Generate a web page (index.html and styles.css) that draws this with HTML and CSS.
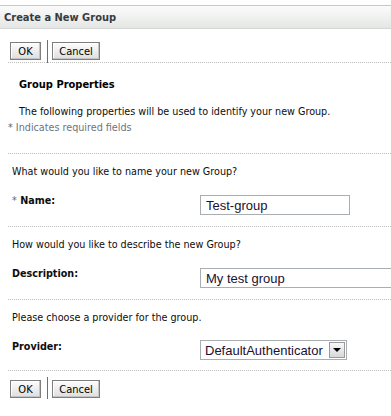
FILE: index.html
```html
<!DOCTYPE html>
<html lang="en">
<head>
    <meta charset="UTF-8">
    <title>Create a New Group</title>
    <link rel="stylesheet" href="styles.css">
</head>
<body>
    <div class="titlebar">
        <h1>Create a New Group</h1>
    </div>

    <div class="toolbar">
        <button class="btn btn-ok">OK</button>
        <span class="sep"></span>
        <button class="btn btn-cancel">Cancel</button>
    </div>

    <div class="intro">
        <h2>Group Properties</h2>
        <p>The following properties will be used to identify your new Group.</p>
    </div>
    <p class="required-note"><span class="star">*</span> Indicates required fields</p>

    <div class="section section-first">
        <p class="question">What would you like to name your new Group?</p>
        <div class="field">
            <label class="label"><span class="star">*</span> Name:</label>
            <input class="text-input input-name" type="text" value="Test-group">
        </div>
    </div>

    <div class="section">
        <p class="question">How would you like to describe the new Group?</p>
        <div class="field">
            <label class="label">Description:</label>
            <input class="text-input input-desc" type="text" value="My test group">
        </div>
    </div>

    <div class="section">
        <p class="question">Please choose a provider for the group.</p>
        <div class="field">
            <label class="label">Provider:</label>
            <div class="select">
                <span class="select-value">DefaultAuthenticator</span>
                <span class="select-arrow"></span>
            </div>
        </div>
    </div>

    <div class="toolbar toolbar-bottom">
        <button class="btn btn-ok">OK</button>
        <span class="sep"></span>
        <button class="btn btn-cancel">Cancel</button>
    </div>
</body>
</html>
```

FILE: styles.css
```css
body { margin: 0; font-family: "DejaVu Sans Condensed", "Liberation Sans", sans-serif; font-size: 10.7px; color: #0d0d0d; background: #fff; width: 391px; overflow: hidden; }
p { margin: 0; }

.titlebar { margin-top: 5px; height: 22px; border-top: 1px solid #c6c6c6; border-bottom: 1px solid #d6d6d6; background: linear-gradient(#fbfbfb, #e4e6e4); display: flex; align-items: center; padding-left: 4px; }
.titlebar h1 { margin: 0; font-size: 11px; font-weight: bold; color: #363b41; }

.toolbar { display: flex; align-items: flex-start; padding: 11px 0 0 10px; height: 22px; }
.sep { width: 1px; height: 23px; background: #6f6f6f; margin: 0 4px 0 6px; }
.btn { font-family: "DejaVu Sans Condensed", "Liberation Sans", sans-serif; font-size: 11px; height: 18px; margin-top: 2px; padding: 0; border: 1px solid #7e7e7e; border-radius: 0; background: linear-gradient(#fdfdfd, #dedede); color: #000; box-shadow: inset -1px -1px 0 #c4c4c4, inset 1px 1px 0 #fff; }
.btn-ok { width: 31px; }
.btn-cancel { width: 48px; }
.toolbar-bottom { margin: 10px 0 0 8px; padding: 6px 0 0 2px; border-top: 1px dotted #bdbdbd; }
.toolbar-bottom .btn { margin-top: 3px; }

.intro { border-top: 1px dotted #bdbdbd; margin-left: 8px; padding: 15px 0 0 11px; }
.intro h2 { margin: 0; font-size: 11px; font-weight: bold; color: #000; line-height: 13px; }
.intro p { margin-top: 14px; line-height: 13px; }

.required-note { margin: 3px 0 0 8px; line-height: 13px; color: #6b7580; }
.star { color: #5d6a78; }

.section { margin: 11px 0 0 8px; border-top: 1px dotted #bdbdbd; padding: 11px 0 0 4px; }
.section-first { margin-top: 19px; }
.question { line-height: 13px; }
.field { display: flex; align-items: flex-start; margin-top: 16px; }
.label { width: 188px; flex-shrink: 0; font-weight: bold; line-height: 13px; }
.label .star { font-weight: normal; }

.text-input { font-family: "Liberation Sans", Arial, sans-serif; font-size: 13px; color: #1a1030; height: 20px; box-sizing: border-box; border: 1px solid #a9aeb2; padding: 0 5px; margin: 1px 0 0 0; outline: none; }
.input-name { width: 150px; }
.input-desc { width: 200px; flex-shrink: 0; }

.select { display: flex; align-items: center; margin-top: 0; height: 20px; width: 147px; box-sizing: border-box; border: 1px solid #a9aeb2; padding: 0 1px 0 4px; font-family: "Liberation Sans", Arial, sans-serif; font-size: 13px; color: #1a1030; }
.select-value { flex: 1; white-space: nowrap; overflow: hidden; }
.select-arrow { width: 16px; height: 16px; box-sizing: border-box; border: 1px solid #9a9a9a; background: linear-gradient(#f8f8f8, #d8d8d8); position: relative; }
.select-arrow::after { content: ""; position: absolute; left: 3px; top: 5px; border-left: 4px solid transparent; border-right: 4px solid transparent; border-top: 4px solid #000; }
```
